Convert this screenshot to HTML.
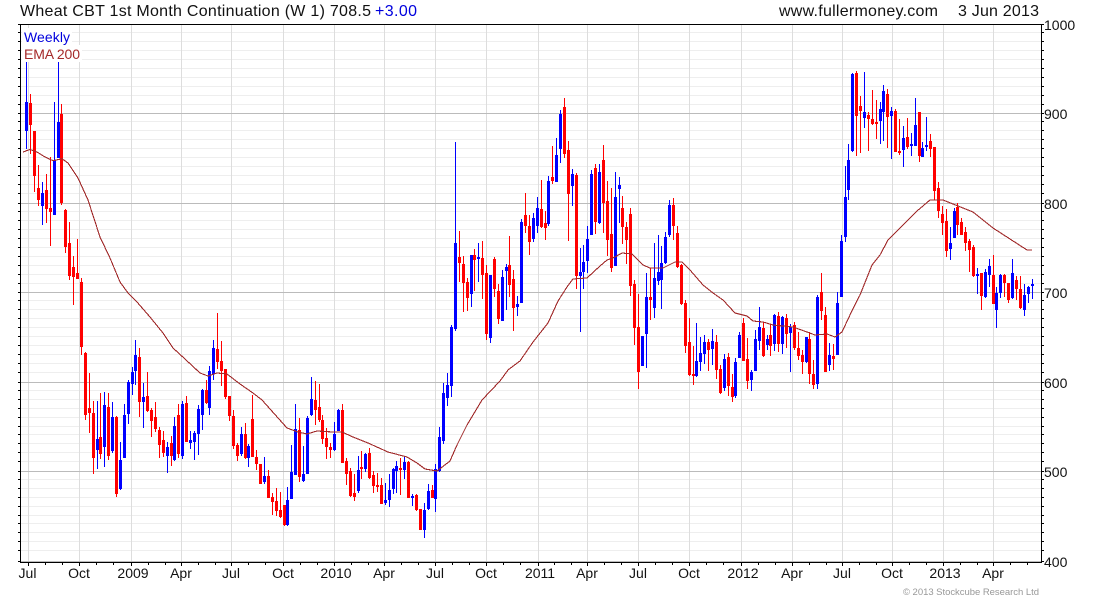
<!DOCTYPE html>
<html><head><meta charset="utf-8"><title>Wheat CBT 1st Month Continuation</title>
<style>html,body{margin:0;padding:0;background:#fff;width:1100px;height:600px;overflow:hidden}svg{display:block}text{font-family:"Liberation Sans",Arial,sans-serif}</style></head>
<body>
<svg width="1100" height="600" viewBox="0 0 1100 600" xmlns="http://www.w3.org/2000/svg">
<g fill="none" shape-rendering="crispEdges" stroke-width="1">
<path stroke="#eeeeee" d="M21 32.5H1041M21 41.5H1041M21 50.5H1041M21 59.5H1041M21 68.5H1041M21 77.5H1041M21 86.5H1041M21 95.5H1041M21 104.5H1041M21 121.5H1041M21 130.5H1041M21 139.5H1041M21 148.5H1041M21 157.5H1041M21 166.5H1041M21 175.5H1041M21 184.5H1041M21 193.5H1041M21 211.5H1041M21 220.5H1041M21 229.5H1041M21 238.5H1041M21 247.5H1041M21 256.5H1041M21 265.5H1041M21 274.5H1041M21 283.5H1041M21 300.5H1041M21 309.5H1041M21 318.5H1041M21 327.5H1041M21 336.5H1041M21 345.5H1041M21 354.5H1041M21 363.5H1041M21 372.5H1041M21 390.5H1041M21 399.5H1041M21 408.5H1041M21 417.5H1041M21 426.5H1041M21 434.5H1041M21 443.5H1041M21 452.5H1041M21 461.5H1041M21 479.5H1041M21 488.5H1041M21 497.5H1041M21 506.5H1041M21 515.5H1041M21 523.5H1041M21 532.5H1041M21 541.5H1041M21 550.5H1041"/>
<path stroke="#dddddd" d="M28.5 25V562M79.5 25V562M131.5 25V562M181.5 25V562M231.5 25V562M283.5 25V562M334.5 25V562M384.5 25V562M435.5 25V562M486.5 25V562M538.5 25V562M587.5 25V562M638.5 25V562M689.5 25V562M741.5 25V562M792.5 25V562M842.5 25V562M892.5 25V562M943.5 25V562M993.5 25V562"/>
<path stroke="#bbbbbb" d="M21 113.5H1041M21 203.5H1041M21 292.5H1041M21 382.5H1041M21 471.5H1041M21 561.5H1041"/>
</g>
<g fill="none" shape-rendering="crispEdges">
<path stroke="#0000ff" stroke-width="1" d="M26.5 62V149M42.5 182V225M54.5 102V215M58.5 62V158M97.5 401V469M104.5 392V467M112.5 402V453M120.5 442V490M124.5 404V458M128.5 380V424M132.5 367V395M135.5 340V385M143.5 383V428M167.5 442V473M174.5 417V461M182.5 401V459M190.5 431V449M194.5 431V460M198.5 405V455M202.5 389V430M209.5 366V415M213.5 340V380M241.5 427V456M248.5 444V467M264.5 457V484M287.5 487V526M291.5 445V499M295.5 404V475M303.5 446V482M307.5 416V474M311.5 377V416M334.5 422V451M338.5 409V431M358.5 456V493M365.5 453V472M385.5 483V505M389.5 474V507M393.5 468V494M396.5 461V493M404.5 456V479M412.5 494V506M424.5 503V538M428.5 484V510M435.5 464V512M439.5 427V472M443.5 383V444M447.5 373V406M451.5 325V397M455.5 142V331M471.5 255V307M478.5 243V282M490.5 275V343M502.5 270V321M506.5 264V310M517.5 296V316M521.5 219V303M533.5 213V242M537.5 197V233M548.5 176V226M556.5 138V182M560.5 110V163M572.5 169V206M580.5 248V332M583.5 245V289M587.5 226V273M591.5 170V235M599.5 164V224M615.5 172V266M619.5 177V223M642.5 336V366M646.5 273V368M654.5 243V318M658.5 235V285M661.5 246V309M665.5 232V264M669.5 200V237M696.5 323V377M700.5 337V371M704.5 335V364M712.5 329V365M724.5 354V391M735.5 358V398M739.5 332V358M751.5 370V391M755.5 330V371M759.5 307V350M767.5 335V350M774.5 314V351M782.5 316V354M790.5 324V372M806.5 337V363M817.5 295V389M829.5 343V371M837.5 292V355M841.5 235V297M845.5 166V242M848.5 144V200M852.5 73V152M864.5 72V128M880.5 102V144M883.5 85V141M891.5 107V159M903.5 126V167M911.5 133V156M915.5 98V146M922.5 142V157M926.5 117V151M950.5 227V260M954.5 208V238M977.5 268V294M985.5 269V298M989.5 259V287M996.5 287V328M1000.5 274V298M1012.5 259V299M1024.5 284V316M1028.5 286V303M1032.5 279V299"/>
<path stroke="#ff0000" stroke-width="1" d="M30.5 94V154M34.5 131V192M38.5 165V206M46.5 174V223M50.5 157V246M61.5 104V205M65.5 209V253M69.5 222V280M73.5 256V305M77.5 239V279M81.5 278V355M85.5 352V420M89.5 373V433M93.5 401V474M100.5 393V459M108.5 393V460M116.5 416V497M139.5 348V417M147.5 372V412M151.5 408V437M155.5 402V432M159.5 427V458M163.5 431V457M171.5 436V466M178.5 404V458M186.5 396V442M206.5 380V404M217.5 313V369M221.5 341V386M225.5 369V399M229.5 396V421M233.5 410V449M237.5 443V461M245.5 423V459M252.5 395V457M256.5 450V470M260.5 464V484M268.5 470V498M272.5 493V515M276.5 488V516M280.5 492V518M284.5 505V526M299.5 418V482M315.5 381V425M319.5 384V422M322.5 415V444M326.5 428V459M330.5 443V458M342.5 404V463M346.5 458V485M350.5 468V497M354.5 474V501M361.5 451V479M369.5 448V479M373.5 471V493M377.5 473V492M381.5 478V504M400.5 458V495M408.5 461V498M416.5 494V511M420.5 509V530M432.5 485V498M459.5 231V282M463.5 256V312M467.5 278V311M474.5 249V291M482.5 241V299M486.5 265V340M494.5 257V297M498.5 284V324M509.5 236V297M513.5 270V331M525.5 193V233M529.5 215V255M541.5 180V228M545.5 211V240M552.5 146V184M564.5 98V158M568.5 141V241M576.5 173V289M595.5 164V234M603.5 145V233M607.5 181V256M611.5 188V272M622.5 196V244M626.5 222V264M630.5 208V296M634.5 280V345M638.5 294V389M650.5 268V320M673.5 198V240M677.5 226V268M681.5 264V305M685.5 300V353M689.5 318V376M693.5 346V385M708.5 339V371M716.5 335V379M720.5 365V394M728.5 353V396M732.5 374V402M743.5 318V361M747.5 338V389M763.5 322V357M770.5 324V356M778.5 312V352M786.5 314V348M794.5 322V350M798.5 332V360M802.5 350V374M809.5 332V384M813.5 360V389M821.5 273V320M825.5 307V372M833.5 344V370M856.5 71V156M860.5 96V153M868.5 112V151M872.5 90V125M876.5 100V139M887.5 89V148M895.5 109V152M899.5 119V155M907.5 118V149M919.5 112V162M930.5 134V157M934.5 147V200M938.5 182V218M942.5 206V235M946.5 209V257M957.5 203V235M961.5 218V235M965.5 227V251M969.5 239V272M973.5 245V277M981.5 273V310M993.5 255V304M1004.5 274V297M1008.5 283V303M1016.5 276V300M1020.5 276V309"/>
<path stroke="#0000ff" stroke-width="3" d="M26.5 102V131M42.5 193V206M54.5 160V215M58.5 122V158M97.5 439V450M104.5 405V447M112.5 417V451M120.5 460V489M124.5 415V458M128.5 382V414M132.5 372V384M135.5 355V371M143.5 397V402M167.5 447V456M174.5 426V460M182.5 404V456M190.5 440V443M194.5 433V442M198.5 409V434M202.5 390V415M209.5 371V408M213.5 348V374M241.5 434V454M248.5 446V458M264.5 476V482M287.5 500V525M291.5 472V499M295.5 429V475M303.5 474V481M307.5 418V474M311.5 399V415M334.5 434V450M338.5 410V431M358.5 470V491M365.5 454V469M385.5 500V503M389.5 490V500M393.5 469V489M396.5 466V471M404.5 462V470M412.5 496V498M424.5 510V530M428.5 491V509M435.5 469V499M439.5 437V471M443.5 393V441M447.5 385V398M451.5 327V386M455.5 243V329M471.5 255V294M478.5 257V259M490.5 275V338M502.5 277V321M506.5 267V271M517.5 304V307M521.5 222V303M533.5 218V239M537.5 208V226M548.5 181V224M556.5 155V182M560.5 114V149M572.5 174V186M580.5 272V276M583.5 262V272M587.5 239V261M591.5 174V235M599.5 172V223M615.5 197V266M619.5 185V189M642.5 336V366M646.5 297V334M654.5 278V308M658.5 272V281M661.5 263V280M665.5 237V263M669.5 205V235M696.5 361V376M700.5 353V362M704.5 342V354M712.5 341V349M724.5 359V388M735.5 362V396M739.5 335V358M751.5 372V380M755.5 339V371M759.5 327V341M767.5 339V345M774.5 315V344M782.5 317V344M790.5 327V333M806.5 337V362M817.5 297V384M829.5 355V365M837.5 303V355M841.5 241V297M845.5 197V237M848.5 160V190M852.5 74V151M864.5 112V118M880.5 109V121M883.5 91V112M891.5 111V116M903.5 138V150M911.5 144V146M915.5 125V146M922.5 148V157M926.5 145V147M950.5 243V249M954.5 211V238M977.5 274V276M985.5 272V297M989.5 266V275M996.5 293V310M1000.5 275V293M1012.5 273V298M1024.5 295V310M1028.5 287V294M1032.5 284V286"/>
<path stroke="#ff0000" stroke-width="3" d="M30.5 103V125M34.5 131V176M38.5 188V200M46.5 190V209M50.5 208V212M61.5 114V203M65.5 210V247M69.5 243V276M73.5 267V277M77.5 273V279M81.5 282V347M85.5 353V415M89.5 408V413M93.5 413V458M100.5 437V454M108.5 407V456M116.5 417V494M139.5 357V402M147.5 396V411M151.5 410V421M155.5 417V429M159.5 430V445M163.5 440V453M171.5 443V456M178.5 415V454M186.5 403V442M206.5 390V403M217.5 349V362M221.5 361V371M225.5 369V397M229.5 396V416M233.5 416V446M237.5 445V456M245.5 434V458M252.5 419V457M256.5 457V464M260.5 464V484M268.5 476V498M272.5 497V502M276.5 501V511M280.5 510V517M284.5 505V525M299.5 430V477M315.5 400V410M319.5 407V420M322.5 420V439M326.5 438V447M330.5 447V450M342.5 410V463M346.5 461V474M350.5 471V496M354.5 493V497M361.5 467V469M369.5 453V478M373.5 475V486M377.5 485V487M381.5 485V504M400.5 468V470M408.5 462V498M416.5 495V510M420.5 509V530M432.5 490V498M459.5 257V263M463.5 264V283M467.5 282V298M474.5 255V260M482.5 258V275M486.5 273V334M494.5 259V289M498.5 291V319M509.5 265V285M513.5 279V308M525.5 215V226M529.5 226V242M541.5 209V227M545.5 223V228M552.5 177V181M564.5 107V154M568.5 150V194M576.5 175V276M595.5 168V222M603.5 160V203M607.5 201V240M611.5 234V268M622.5 208V227M626.5 227V240M630.5 214V286M634.5 284V328M638.5 327V372M650.5 297V300M673.5 205V226M677.5 233V267M681.5 265V304M685.5 303V346M689.5 342V375M693.5 374V376M708.5 342V350M716.5 342V370M720.5 369V393M728.5 357V386M732.5 387V397M743.5 323V361M747.5 359V381M763.5 328V356M770.5 335V346M778.5 316V344M786.5 318V334M794.5 325V348M798.5 348V356M802.5 355V362M809.5 339V374M813.5 374V385M821.5 292V311M825.5 315V372M833.5 356V359M856.5 73V116M860.5 106V111M868.5 115V119M872.5 119V124M876.5 122V124M887.5 94V117M895.5 111V152M899.5 151V153M907.5 137V147M919.5 112V156M930.5 141V149M934.5 147V191M938.5 188V211M942.5 214V223M946.5 221V251M957.5 207V225M961.5 222V235M965.5 232V243M969.5 241V250M973.5 247V276M981.5 273V296M993.5 275V304M1004.5 275V283M1008.5 283V300M1016.5 280V289M1020.5 289V308"/>
</g>
<rect x="22" y="28" width="50" height="17" fill="#fff"/>
<rect x="22" y="45" width="60" height="17" fill="#fff"/>
<polyline fill="none" stroke="#a02a2a" stroke-width="1.1" shape-rendering="crispEdges" points="23,152 30,149.5 37,152 45,157 53,160.7 62,158.7 68,163 78,178 88,200 100,237 110,258 120,282 128,293 137,302 150,317 163,333 173,348 185,359 200,373 208,376 217,373 227,374 240,384 253,393 262,400 287,428 298,432 307,434 317,431 333,432 342,432 353,437 368,443 388,452 407,457 417,463 425,469 437,471 450,461 457,445 467,425 482,400 500,381 508,370 520,361 533,342 548,323 558,301 567,287 573,279 587,278 600,266 607,260 613,258 622,253 632,254 643,265 650,268 663,268 675,262 682,262 690,270 703,285 713,293 723,300 735,313 747,316 753,321 763,322 773,325 793,327 807,332 815,335 827,334 835,337 842,332 850,315 860,295 872,265 880,255 888,240 917,211 930,200 943,200 973,212 993,228 1010,239 1027,250 1032,250"/>
<g fill="none" stroke="#000" stroke-width="1" shape-rendering="crispEdges">
<path d="M20.5 24V563M20 24.5H1041.5M1041.5 24V563M20 562.5H1041.5"/>
<path d="M18 24.5H20M18 32.5H20M18 41.5H20M18 50.5H20M18 59.5H20M18 68.5H20M18 77.5H20M18 86.5H20M18 95.5H20M18 104.5H20M18 113.5H20M18 121.5H20M18 130.5H20M18 139.5H20M18 148.5H20M18 157.5H20M18 166.5H20M18 175.5H20M18 184.5H20M18 193.5H20M18 203.5H20M18 211.5H20M18 220.5H20M18 229.5H20M18 238.5H20M18 247.5H20M18 256.5H20M18 265.5H20M18 274.5H20M18 283.5H20M18 292.5H20M18 300.5H20M18 309.5H20M18 318.5H20M18 327.5H20M18 336.5H20M18 345.5H20M18 354.5H20M18 363.5H20M18 372.5H20M18 382.5H20M18 390.5H20M18 399.5H20M18 408.5H20M18 417.5H20M18 426.5H20M18 434.5H20M18 443.5H20M18 452.5H20M18 461.5H20M18 471.5H20M18 479.5H20M18 488.5H20M18 497.5H20M18 506.5H20M18 515.5H20M18 523.5H20M18 532.5H20M18 541.5H20M18 550.5H20M18 561.5H20"/>
<path d="M1042 24.5H1044M1042 32.5H1044M1042 41.5H1044M1042 50.5H1044M1042 59.5H1044M1042 68.5H1044M1042 77.5H1044M1042 86.5H1044M1042 95.5H1044M1042 104.5H1044M1042 113.5H1044M1042 121.5H1044M1042 130.5H1044M1042 139.5H1044M1042 148.5H1044M1042 157.5H1044M1042 166.5H1044M1042 175.5H1044M1042 184.5H1044M1042 193.5H1044M1042 203.5H1044M1042 211.5H1044M1042 220.5H1044M1042 229.5H1044M1042 238.5H1044M1042 247.5H1044M1042 256.5H1044M1042 265.5H1044M1042 274.5H1044M1042 283.5H1044M1042 292.5H1044M1042 300.5H1044M1042 309.5H1044M1042 318.5H1044M1042 327.5H1044M1042 336.5H1044M1042 345.5H1044M1042 354.5H1044M1042 363.5H1044M1042 372.5H1044M1042 382.5H1044M1042 390.5H1044M1042 399.5H1044M1042 408.5H1044M1042 417.5H1044M1042 426.5H1044M1042 434.5H1044M1042 443.5H1044M1042 452.5H1044M1042 461.5H1044M1042 471.5H1044M1042 479.5H1044M1042 488.5H1044M1042 497.5H1044M1042 506.5H1044M1042 515.5H1044M1042 523.5H1044M1042 532.5H1044M1042 541.5H1044M1042 550.5H1044M1042 561.5H1044"/>
<path d="M28.5 563V566M79.5 563V566M131.5 563V566M181.5 563V566M231.5 563V566M283.5 563V566M334.5 563V566M384.5 563V566M435.5 563V566M486.5 563V566M538.5 563V566M587.5 563V566M638.5 563V566M689.5 563V566M741.5 563V566M792.5 563V566M842.5 563V566M892.5 563V566M943.5 563V566M993.5 563V566"/>
<path d="M45.5 563V565M62.5 563V565M96.5 563V565M113.5 563V565M148.5 563V565M165.5 563V565M198.5 563V565M215.5 563V565M248.5 563V565M265.5 563V565M300.5 563V565M317.5 563V565M351.5 563V565M368.5 563V565M401.5 563V565M418.5 563V565M452.5 563V565M469.5 563V565M503.5 563V565M520.5 563V565M554.5 563V565M571.5 563V565M604.5 563V565M621.5 563V565M655.5 563V565M672.5 563V565M706.5 563V565M723.5 563V565M758.5 563V565M775.5 563V565M809.5 563V565M826.5 563V565M859.5 563V565M876.5 563V565M909.5 563V565M926.5 563V565M960.5 563V565M977.5 563V565M1010.5 563V565M1027.5 563V565"/>
</g>
<g font-size="16" fill="#111">
<text x="20" y="16" textLength="351" lengthAdjust="spacing">Wheat CBT 1st Month Continuation (W 1) 708.5</text>
<text x="375" y="16" textLength="42" lengthAdjust="spacing" fill="#0000dd">+3.00</text>
<text x="779" y="16" textLength="159" lengthAdjust="spacing">www.fullermoney.com</text>
<text x="958" y="16" textLength="81" lengthAdjust="spacing">3 Jun 2013</text>
</g>
<text x="24" y="42" font-size="14" fill="#0000dd" textLength="46">Weekly</text>
<text x="24" y="59" font-size="14" fill="#a52a2a" textLength="56">EMA 200</text>
<g font-size="14" fill="#111">
<text x="1044" y="30">1000</text>
<text x="1044" y="119">900</text>
<text x="1044" y="209">800</text>
<text x="1044" y="298">700</text>
<text x="1044" y="388">600</text>
<text x="1044" y="477">500</text>
<text x="1044" y="567">400</text>
</g>
<g font-size="14" fill="#111" text-anchor="middle">
<text x="27.5" y="578">Jul</text>
<text x="79" y="578">Oct</text>
<text x="133" y="578">2009</text>
<text x="181" y="578">Apr</text>
<text x="231" y="578">Jul</text>
<text x="283" y="578">Oct</text>
<text x="336" y="578">2010</text>
<text x="384" y="578">Apr</text>
<text x="435" y="578">Jul</text>
<text x="486" y="578">Oct</text>
<text x="540" y="578">2011</text>
<text x="587" y="578">Apr</text>
<text x="638" y="578">Jul</text>
<text x="689" y="578">Oct</text>
<text x="743" y="578">2012</text>
<text x="792" y="578">Apr</text>
<text x="842" y="578">Jul</text>
<text x="892" y="578">Oct</text>
<text x="945" y="578">2013</text>
<text x="993" y="578">Apr</text>
</g>
<text x="903" y="595" font-size="9.5" fill="#999" textLength="136" lengthAdjust="spacing">© 2013 Stockcube Research Ltd</text>
</svg>
</body></html>
